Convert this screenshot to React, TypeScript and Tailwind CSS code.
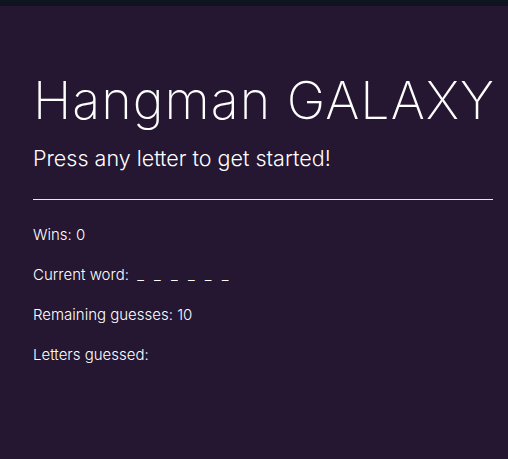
export default function App() {
  return (
    <div className="min-h-screen bg-[#0f1520] pt-[6px]" style={{ fontFamily: "Inter, 'Liberation Sans', sans-serif" }}>
      <div className="min-h-[453px] bg-[#251631] px-[33px] pt-[60px] text-white">
        <h1 className="whitespace-nowrap text-[52px] font-extralight leading-[70px] tracking-[1px]">Hangman GALAXY</h1>
        <p className="mt-[8px] text-[21.5px] font-light leading-[28px]">Press any letter to get started!</p>
        <hr className="mt-[27px] w-[460px] border-t border-white/90" />
        <div className="mt-[25px] flex flex-col gap-[20px] text-[15px] font-light leading-[20px]">
          <p>Wins: 0</p>
          <p>
            Current word: <span className="ml-[4px] [word-spacing:6px]">_ _ _ _ _ _</span>
          </p>
          <p>Remaining guesses: 10</p>
          <p>Letters guessed:</p>
        </div>
      </div>
    </div>
  );
}
